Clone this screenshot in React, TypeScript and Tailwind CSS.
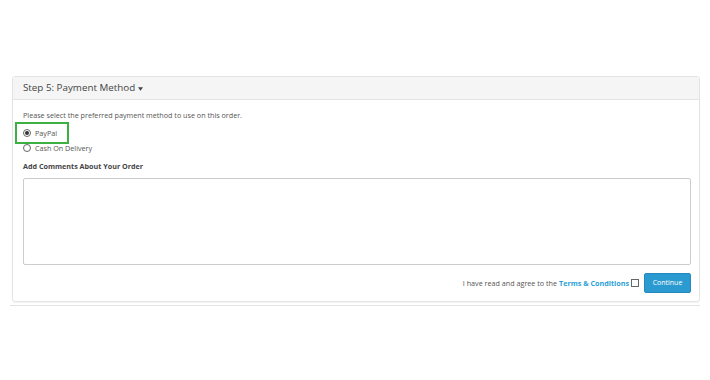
export default function App() {
  return (
    <div
      className="w-[710px] h-[380px] bg-white pt-[76px] pl-[12px]"
      style={{ fontFamily: '"Open Sans", sans-serif' }}
    >
      {/* Payment panel */}
      <div className="w-[688px] border border-[#e3e3e3] rounded-[3px] shadow-[0_1px_1px_rgba(0,0,0,0.05)]">
        <div className="h-[23px] bg-[#f5f5f5] border-b border-[#e3e3e3] flex items-center pl-[10px] text-[9.8px] text-[#444]">
          <span>Step 5: Payment Method</span>
          <svg className="ml-[3px] mt-[1px]" width="5" height="4" viewBox="0 0 6 4">
            <path d="M0 0h6L3 4z" fill="#444" />
          </svg>
        </div>
        <div className="pl-[10px] pr-[8px] pt-[10px] pb-[8px] text-[7.2px] text-[#555]">
          <p className="leading-[10px]">
            Please select the preferred payment method to use on this order.
          </p>
          <div className="mt-[2px] -ml-[8px] w-[54px] h-[22px] border-2 border-[#3cb043] flex items-center pl-[6px]">
            <span className="w-[8px] h-[8px] rounded-full border border-[#666] flex items-center justify-center">
              <span className="w-[4px] h-[4px] rounded-full bg-[#333]" />
            </span>
            <span className="ml-[4px]">PayPal</span>
          </div>
          <div className="-mt-[1px] flex items-center h-[10px]">
            <span className="w-[8px] h-[8px] rounded-full border border-[#666]" />
            <span className="ml-[4px]">Cash On Delivery</span>
          </div>
          <p className="mt-[8px] font-bold text-[#444] leading-[10px]">
            Add Comments About Your Order
          </p>
          <div className="mt-[7px] h-[87px] border border-[#ccc] rounded-[2px] bg-white" />
          <div className="mt-[8px] flex items-center justify-end">
            <span>I have read and agree to the </span>
            <span className="ml-[2px] font-bold text-[#2a9fd6]">Terms &amp; Conditions</span>
            <span className="ml-[2px] w-[8px] h-[8px] border border-[#666] bg-white" />
            <button className="ml-[5px] w-[47px] h-[20px] bg-[#2b9ad0] border border-[#2589bd] rounded-[2px] text-white text-[7px]">
              Continue
            </button>
          </div>
        </div>
      </div>
      {/* next panel edge */}
      <div className="w-[690px] -ml-[2px] mt-[3px] border-t border-[#e3e3e3]" />
    </div>
  );
}
